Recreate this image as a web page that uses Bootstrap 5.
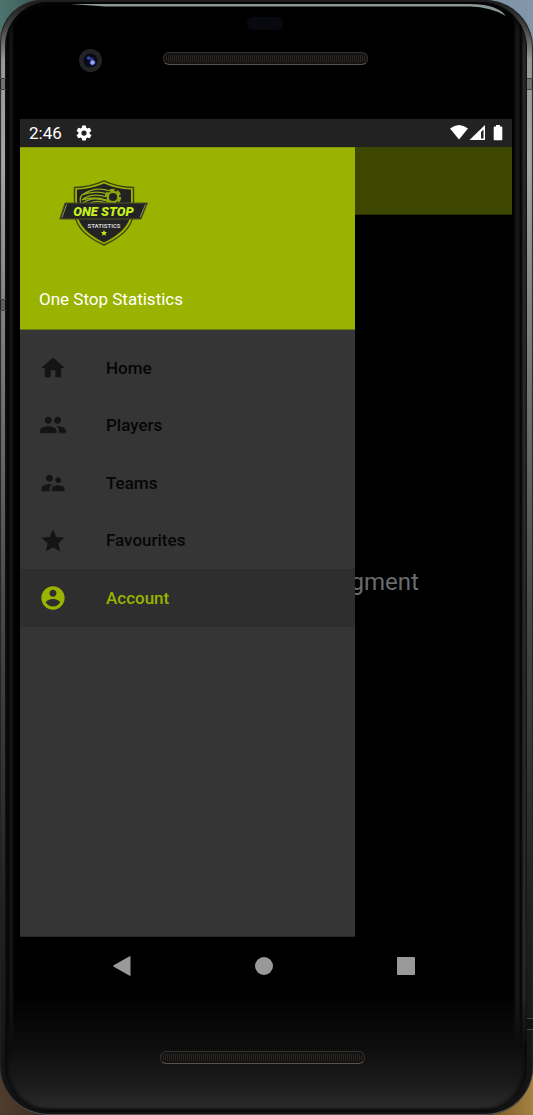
<!DOCTYPE html>
<html lang="en">
<head>
<meta charset="utf-8">
<meta name="viewport" content="width=device-width, initial-scale=1">
<title>One Stop Statistics</title>
<link href="https://cdn.jsdelivr.net/npm/bootstrap@5.3.0/dist/css/bootstrap.min.css" rel="stylesheet">
<style>
  :root { --lime: #99b300; --panel: #353535; }
  body {
    font-family: Roboto, "Liberation Sans", sans-serif;
    background: linear-gradient(90deg, #4d7570, #344a4a 10%, #7f91a0 90%, #8197aa) top / 100% 120px no-repeat,
                linear-gradient(90deg, #503c2c, #3b2c22 10%, #6d5023 90%, #a58240);
  }
  /* metal rim */
  .device {
    padding: 2px 6px 3px 5px;
    border-radius: 42px 48px 48px 48px;
    background: linear-gradient(#1b1b1b, #444 28px, #999 60px, #a6a6a6 160px, #858585 300px, #4a4a4a 600px, #222 900px, #111);
    box-shadow: inset 0 -1px 0 #555, inset 0 0 1px 1px #222;
  }
  .device-face {
    position: relative;
    border-radius: 44px 46px 46px 46px;
    background:
      linear-gradient(transparent calc(100% - 120px), #0d0d0d calc(100% - 65px), #1a1a1a calc(100% - 30px), #2a2a2a calc(100% - 5px), #080808),
      linear-gradient(90deg, #3a3a3a 0, #060606 2px, #0a0a0a 4px, #191919 6px, #141414 7px, #000 9px,
        #000 calc(100% - 14px), #191919 calc(100% - 10px), #141414 calc(100% - 8px), #020202 calc(100% - 6px), #4b4b4b calc(100% - 2px), #333);
    padding: 0 15px;
  }
  .device-face::before {
    content: ""; position: absolute; inset: 0; border-radius: inherit; pointer-events: none;
    box-shadow: inset 0 0 4px 2px #080808;
  }
  /* frame seams */
  .seam { position: absolute; width: 6px; height: 12px; background: #0004; border: solid #444; border-width: 1px 0; }
  .seam-l { left: -5px; } .seam-r { right: -6px; }
  .seam-hi { top: 76px; } .seam-mid { top: 297px; } .seam-low { bottom: 82px; }
  .top-shine { position: absolute; top: 1px; left: 60px; width: calc(100% - 76px); height: 18px; }
  .forehead { height: 117px; }
  .sensor { position: absolute; top: 15px; left: 50%; width: 36px; height: 13px; margin-left: -19px; border-radius: 6px; background: #08090e; }
  .lens { position: absolute; top: 46px; left: 73px; }
  .grille {
    width: 205px; height: 13px; border-radius: 6px;
    border: 1px solid #33312f; border-bottom-color: #555250;
    background: repeating-linear-gradient(90deg, #2a2622 0 1px, #11100f 1px 2px);
    box-shadow: inset 0 0 0 2px #151413;
  }
  .grille-top { margin: 50px 0 0 -2px; }
  .grille-bottom { margin: 57px 0 0 -7px; }
  .chin { height: 118px; }

  .app-screen { min-height: 817px; }
  .status { height: 28px; background: #222; font-size: 17px; line-height: 28px; padding: 0 9px; }
  .status-gap { gap: 13px; }
  .drawer { width: 68%; flex: none; background: var(--panel); position: relative; z-index: 1; border-bottom: 1px solid #262626; }
  .drawer-head { height: 183px; background: var(--lime); padding: 32px 19px 18px; border-top: 1px solid #829800; border-bottom: 1px solid #6d7b12; font-size: 17px; line-height: 24px; }
  .brand-logo { margin-left: 20px; }
  .menu { height: 288px; margin-top: 9px; display: grid; grid-template-rows: repeat(5, 1fr); }
  .menu a { color: #060606; font-size: 17px; font-weight: 500; text-decoration: none; padding-left: 19px; gap: 39px; }
  .menu svg { width: 28px; height: 28px; fill: #141414; }
  .menu span { padding-top: 1px; }
  .menu a.active { color: var(--lime); background: #2e2e2e; }
  .menu a.active svg { fill: var(--lime); }
  .app-bar { height: 68px; background: #3d4700; border-bottom: 1px solid #293000; }
  .page-text { color: #6b6b6b; font-size: 24px; line-height: 32px; margin-left: -4px; padding-top: 12px; }
  .sys-nav { height: 57px; padding: 0 35px 0 31px; }
  .sys-nav button { width: 48px; height: 48px; }
  .sys-nav svg { fill: #999; display: block; }
</style>
</head>
<body>
<div class="device min-vh-100 d-flex flex-column">
  <div class="device-face flex-fill d-flex flex-column">
    <i class="seam seam-l seam-hi"></i><i class="seam seam-l seam-mid"></i>
    <i class="seam seam-r seam-hi"></i><i class="seam seam-r seam-low"></i>
    <svg class="top-shine" viewBox="0 0 446 18" preserveAspectRatio="none" aria-hidden="true">
      <path d="M5 1H405Q432 1 441 13Q426 4 405 3.500H40Z" fill="#8b9696"/>
    </svg>
    <span class="sensor"></span>
    <svg class="lens" width="25" height="25" viewBox="0 0 25 25" aria-hidden="true">
      <circle cx="12.500" cy="12.500" r="11.500" fill="#242323"/><circle cx="12.500" cy="12.500" r="7" fill="#090b1c"/>
      <path d="M10 8l5 2 3 5-4 3-3-3 2-2-4-2z" fill="#26378c"/><circle cx="14.500" cy="14.500" r="2.200" fill="#99a5ee"/><circle cx="10" cy="10" r="1" fill="#4960bd"/>
    </svg>
    <div class="forehead d-flex justify-content-center"><div class="grille grille-top"></div></div>

    <main class="app-screen flex-fill d-flex flex-column">
      <div class="status d-flex align-items-center justify-content-between text-white">
        <div class="status-gap d-flex align-items-center">
          <span>2:46</span>
          <svg width="18" height="18" viewBox="0 0 24 24" fill="#fff" aria-hidden="true"><path d="M19.400 13a7.500 7.500 0 0 0 0-2l2.200-1.700a.5.5 0 0 0 .1-.6l-2-3.500a.5.5 0 0 0-.6-.2l-2.500 1a7.700 7.700 0 0 0-1.700-1L14.500 2.400a.5.5 0 0 0-.5-.4h-4a.5.5 0 0 0-.5.4L9.100 5a7.700 7.700 0 0 0-1.700 1l-2.500-1a.5.5 0 0 0-.6.200l-2 3.500a.5.5 0 0 0 .1.600L4.600 11a7.500 7.500 0 0 0 0 2l-2.200 1.700a.5.5 0 0 0-.1.600l2 3.500c.1.200.4.300.6.200l2.500-1a7.700 7.700 0 0 0 1.700 1l.4 2.600c0 .200.200.400.5.400h4c.300 0 .5-.2.500-.4l.4-2.600a7.700 7.700 0 0 0 1.700-1l2.500 1c.2.100.5 0 .6-.2l2-3.500a.5.5 0 0 0-.1-.6zM12 15.500a3.500 3.500 0 1 1 0-7 3.500 3.500 0 0 1 0 7z"/></svg>
        </div>
        <svg width="53" height="18" viewBox="0 0 53 18" fill="#fff" aria-hidden="true">
          <path d="M0 4.500Q9-2.500 18 4.500L9 15.500z"/>
          <path fill-rule="evenodd" d="M35 1V16H19.500zM33.500 5.500L31 8V14.500h2.500z"/>
          <path d="M46 1h4v1.500h1.500q.8 0 .8.800V15.500q0 .8-.8.800h-7q-.8 0-.8-.8V3.300q0-.8.8-.8H46z"/>
        </svg>
      </div>

      <div class="flex-fill d-flex">
        <nav class="drawer" aria-label="Main">
          <header class="drawer-head d-flex flex-column justify-content-between text-white">
            <svg class="brand-logo" width="89" height="66" viewBox="0 0 89 66" role="img" aria-label="One Stop Statistics logo">
              <path d="M45 .8Q31 7 15.500 7.500V34Q18 53 45 65Q72 53 74.500 34V7.500Q58 7 45 .8Z" fill="#99b300" stroke="#3c430f" stroke-width="1.400"/>
              <path d="M45 3.500Q32 9 18 9.500V34Q21 51 45 62.500Q69 51 72 34V9.500Q57 9 45 3.500Z" fill="#232323"/>
              <g fill="none" stroke="#93ab14" stroke-width="1.300">
                <path d="M51 11Q36 6 23 15Q36 10 49 14"/><path d="M23 15Q20 19 22 23"/><path d="M48 17Q32 12 23 20Q36 16 47 20"/><path d="M47 21Q34 16 24 23M50 25Q41 19 31 23"/>
              </g>
              <circle cx="54" cy="17" r="7" fill="#232323" stroke="#8fa60c" stroke-width="2.500" stroke-dasharray="5 2.330"/>
              <circle cx="54" cy="17" r="5.200" fill="none" stroke="#8fa60c" stroke-width="2.200"/>
              <path d="M54 13.500l3.200 2.300-1.200 3.700h-4l-1.200-3.700z" fill="#232323"/>
              <path d="M6 23H88.500L82 39H.8Z" fill="#232323" stroke="#4e5725" stroke-width="1"/>
              <path d="M7.500 24.500L3 37.500M86.500 24.500L81 37.500" stroke="#8d9a55" stroke-width="1"/>
              <text x="44.500" y="35.500" text-anchor="middle" font-family="Roboto, sans-serif" font-size="13" font-weight="900" font-style="italic" fill="#c6f01e">ONE STOP</text>
              <text x="45" y="47.500" text-anchor="middle" font-family="Roboto, sans-serif" font-size="6" font-weight="700" fill="#d4d4d4">STATISTICS</text>
              <path d="M45 50l.9 2h2.200l-1.700 1.500.7 2.300-2.100-1.300-2.100 1.300.7-2.300-1.700-1.500h2.200z" fill="#c6f01e"/>
            </svg>
            <span>One Stop Statistics</span>
          </header>
          <div class="menu">
            <a href="#home" class="d-flex align-items-center"><svg viewBox="0 0 24 24" aria-hidden="true"><path d="M10 20v-6h4v6h5v-8h3L12 3 2 12h3v8z"/></svg><span>Home</span></a>
            <a href="#players" class="d-flex align-items-center"><svg viewBox="0 0 24 24" aria-hidden="true"><path d="M16 11c1.660 0 2.990-1.340 2.990-3S17.660 5 16 5s-3 1.340-3 3 1.340 3 3 3zm-8 0c1.660 0 2.990-1.340 2.990-3S9.660 5 8 5 5 6.340 5 8s1.340 3 3 3zm0 2c-2.330 0-7 1.170-7 3.500V19h14v-2.500c0-2.330-4.670-3.500-7-3.500zm8 0c-.29 0-.62.020-.97.050 1.160.84 1.970 1.970 1.970 3.450V19h6v-2.500c0-2.330-4.670-3.500-7-3.500z"/></svg><span>Players</span></a>
            <a href="#teams" class="d-flex align-items-center"><svg viewBox="0 0 24 24" aria-hidden="true"><path d="M16.500 12c1.380 0 2.490-1.120 2.490-2.500S17.880 7 16.500 7 14 8.120 14 9.500s1.120 2.500 2.500 2.500zM9 11c1.660 0 2.990-1.340 2.990-3S10.660 5 9 5 6 6.340 6 8s1.340 3 3 3zm7.500 3c-1.830 0-5.500.92-5.500 2.750V19h11v-2.250c0-1.830-3.670-2.750-5.500-2.750zM9 13c-2.330 0-7 1.170-7 3.500V19h7v-2.250c0-.85.330-2.340 2.370-3.470C10.500 13.100 9.660 13 9 13z"/></svg><span>Teams</span></a>
            <a href="#favourites" class="d-flex align-items-center"><svg viewBox="0 0 24 24" aria-hidden="true"><path d="M12 17.270L18.180 21l-1.640-7.030L22 9.240l-7.190-.61L12 2 9.190 8.630 2 9.240l5.460 4.730L5.820 21z"/></svg><span>Favourites</span></a>
            <a href="#account" class="active d-flex align-items-center" aria-current="page"><svg viewBox="0 0 24 24" aria-hidden="true"><path d="M12 2C6.480 2 2 6.480 2 12s4.480 10 10 10 10-4.480 10-10S17.520 2 12 2zm0 3c1.660 0 3 1.340 3 3s-1.340 3-3 3-3-1.340-3-3 1.340-3 3-3zm0 14.200c-2.500 0-4.710-1.280-6-3.220.030-1.990 4-3.080 6-3.080s5.970 1.090 6 3.080c-1.290 1.940-3.500 3.220-6 3.220z"/></svg><span>Account</span></a>
          </div>
        </nav>
        <section class="flex-fill d-flex flex-column">
          <div class="app-bar"></div>
          <div class="flex-fill d-flex align-items-center"><span class="page-text">gment</span></div>
        </section>
      </div>
    </main>

    <div class="sys-nav d-flex justify-content-around align-items-center">
      <button class="btn p-0 border-0 d-flex align-items-center justify-content-center" aria-label="Back"><svg width="20" height="20" viewBox="0 0 20 20"><path d="M18.500.6V19.400q0 .8-.8.300L1.700 10.700q-.9-.7 0-1.400L17.700.3q.8-.5.8.3z"/></svg></button>
      <button class="btn p-0 border-0 d-flex align-items-center justify-content-center" aria-label="Home"><svg width="20" height="20" viewBox="0 0 20 20"><circle cx="10" cy="10" r="9"/></svg></button>
      <button class="btn p-0 border-0 d-flex align-items-center justify-content-center" aria-label="Recent apps"><svg width="20" height="20" viewBox="0 0 20 20"><rect x="1" y="1" width="18" height="18" rx="1"/></svg></button>
    </div>
    <div class="chin d-flex justify-content-center"><div class="grille grille-bottom"></div></div>
  </div>
</div>
<script src="https://cdn.jsdelivr.net/npm/bootstrap@5.3.0/dist/js/bootstrap.bundle.min.js"></script>
</body>
</html>
